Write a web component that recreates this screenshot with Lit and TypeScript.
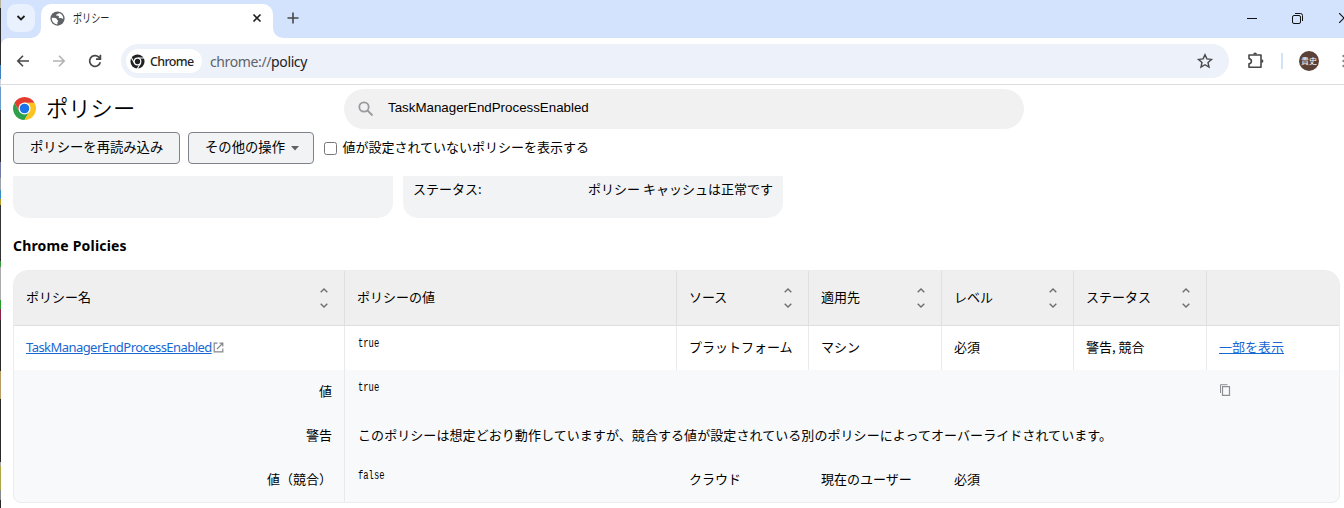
import { LitElement, html, css, svg } from "lit";
import { customElement, property } from "lit/decorators.js";

@customElement("sort-arrows")
class SortArrows extends LitElement {
  static styles = css`:host { display: block; width: 10px; height: 22px; } svg { display: block; }`;
  render() {
    return html`<svg width="10" height="22" viewBox="0 0 10 22" fill="none" stroke="#6b6f73" stroke-width="1.4">
      <path d="M1.700 5.300 5 2l3.300 3.300M1.700 16.700 5 20l3.300-3.300"/></svg>`;
  }
}

@customElement("chrome-logo")
class ChromeLogo extends LitElement {
  @property({ type: Boolean }) mono = false;
  @property({ type: Number }) size = 22;
  static styles = css`:host { display: block; } svg { display: block; }`;
  render() {
    const shape = this.mono
      ? svg`<circle cx="24" cy="24" r="22.500" fill="#202124"/><circle cx="24" cy="24" r="12.500" fill="#fff"/>
        <path d="M24 13H45M14.500 29.500 4 11.300M33.500 29.500 23 47.700" stroke="#fff" stroke-width="3.500"/><circle cx="24" cy="24" r="8.500" fill="#202124"/>`
      : svg`<path d="M3.220 12A24 24 0 0 0 24 48L34.400 30 24 24 13.600 30Z" fill="#2da04b"/>
        <path d="M44.780 12A24 24 0 0 1 24 48L34.400 30 24 12Z" fill="#fcc31e"/>
        <path d="M3.220 12A24 24 0 0 1 44.780 12H24L13.600 30Z" fill="#e33b2e"/>
        <circle cx="24" cy="24" r="12.500" fill="#fff"/><circle cx="24" cy="24" r="10" fill="#1a73e8"/>`;
    return html`<svg width=${this.size} height=${this.size} viewBox="0 0 48 48">${shape}</svg>`;
  }
}

@customElement("browser-chrome")
class BrowserChrome extends LitElement {
  static styles = css`
    :host { display: block; height: 85px; background: linear-gradient(#d3e2fd 50px, #fff 50px); }
    svg { display: block; flex: none; }
    .tabs { display: flex; height: 38px; }
    .down { width: 28px; height: 28px; margin: 4px 0 0 6px; border-radius: 9px; background: #e9f0fe; display: flex; align-items: center; justify-content: center; }
    .tab { box-sizing: border-box; width: 232px; height: 34px; margin: 4px 0 0 6px; padding: 0 9px; background: #fff; border-radius: 10px 10px 0 0; display: flex; align-items: center; padding-bottom: 6px; }
    .title { width: 40px; margin-left: 8px; font-size: 12px; color: #1f1f1f; transform: scaleX(.76); transform-origin: 0 50%; white-space: nowrap; }
    .close { margin-left: auto; margin-right: 2px; }
    .foot { align-self: flex-end; }
    .lead { margin: 0 -6px 0 -4px; }
    .plus { margin: 12px 0 0 4px; }
    .wins { margin-left: auto; display: flex; align-items: center; height: 36px; }
    .max { margin-left: 35px; }
    .x { margin-left: 36px; }
    .bar { box-sizing: border-box; height: 47px; display: flex; align-items: center; border-bottom: 1px solid #dcdde0; background: #fff; border-top-left-radius: 8px; }
    .nav { display: flex; gap: 20px; margin-left: 14px; width: 106px; }
    .omni { box-sizing: border-box; width: 1108px; height: 34px; border-radius: 17px; background: #edf1fa; display: flex; align-items: center; padding: 0 15px 0 5px; }
    .chip { box-sizing: border-box; width: 76px; height: 24px; border-radius: 12px; background: #fff; display: flex; align-items: center; padding-left: 4px; gap: 5px; }
    .brand { font: 500 12.500px "Noto Sans", sans-serif; letter-spacing: -.65px; color: #1f1f1f; }
    .url { margin-left: 8px; font: 14px "Noto Sans", sans-serif; letter-spacing: -.38px; color: #202124; }
    .scheme { color: #5f6368; }
    .star { margin-left: auto; }
    .ext { margin-left: 18px; }
    .sep { width: 2px; height: 16px; background: #d0e3f8; margin-left: 16px; }
    .avatar { width: 20px; height: 20px; border-radius: 50%; background: #5b4037; color: #fff; font-size: 8px; line-height: 19px; text-align: center; margin-left: 16px; }
    .dots { margin-left: 23px; }
  `;
  render() {
    return html`
      <div class="tabs">
        <div class="down"><svg width="10" height="8" viewBox="0 0 10 8" fill="none" stroke="#1f1f1f" stroke-width="1.800"><path d="M1.500 2 5 5.500 8.500 2"/></svg></div>
        <svg class="foot lead" width="10" height="10"><path d="M10 0V10H0A10 10 0 0 0 10 0" fill="#fff"/></svg>
        <div class="tab">
          <svg width="15" height="15" viewBox="0 0 16 16"><circle cx="8" cy="8" r="7.600" fill="#5f6368"/>
            <path d="M1.800 7.500c2-.5 4-.3 5 .4.900.6.300 1.800 1.400 2 .8.200.6 1.500-.3 2.100v2.200c-3.300 0-6.100-2.700-6.100-6.700zM9.500 2c-.3 1.300-2.600.8-2.800 2.200-.1.900 1.800.4 2.500 1.100.8.800-.4 1.300.5 2 1 .8 1.800-.2 2.500.4.600.5 1.300.6 2 .3C14.200 5 12.400 2.600 9.500 2" fill="#fff"/></svg>
          <span class="title">ポリシー</span>
          <svg class="close" width="10" height="10" viewBox="0 0 10 10" stroke="#1f1f1f" stroke-width="1.600"><path d="m1.500 1.500 7 7m0-7-7 7"/></svg>
        </div>
        <svg class="foot" width="10" height="10"><path d="M0 0V10H10A10 10 0 0 1 0 0" fill="#fff"/></svg>
        <svg class="plus" width="12" height="12" stroke="#474747" stroke-width="1.600"><path d="M6 .5v11M.5 6h11"/></svg>
        <div class="wins">
          <svg width="10" height="10" stroke="#111"><path d="M0 5.500h10"/></svg>
          <svg class="max" width="11" height="11" fill="none" stroke="#111" viewBox="0 0 11 11"><rect x=".5" y="2.500" width="8" height="8" rx="1.500"/><path d="M3 .5h5.500a2 2 0 0 1 2 2V8"/></svg>
          <svg class="x" width="5" height="10" stroke="#111" stroke-width="1.200"><path d="m0 0 10 10M0 10 10 0"/></svg>
        </div>
      </div>
      <div class="bar">
        <div class="nav">
          <svg width="16" height="16" viewBox="0 0 16 16" fill="none" stroke="#474747" stroke-width="1.600"><path d="M14 8H3M8 2.800 2.800 8 8 13.200"/></svg>
          <svg width="16" height="16" viewBox="0 0 16 16" fill="none" stroke="#b3b3b3" stroke-width="1.600"><path d="M2 8h11M8 2.800 13.200 8 8 13.200"/></svg>
          <svg width="16" height="16" viewBox="0 0 16 16" fill="none" stroke="#474747" stroke-width="1.700"><path d="M13.300 9.200A5.400 5.400 0 1 1 11.800 4.100L13.300 5.600M13.400 1.800v4.400H9"/></svg>
        </div>
        <div class="omni">
          <div class="chip"><chrome-logo mono .size=${15}></chrome-logo><span class="brand">Chrome</span></div>
          <span class="url"><span class="scheme">chrome://</span>policy</span>
          <svg class="star" width="18" height="18" viewBox="0 0 18 18" fill="none" stroke="#474747" stroke-width="1.400"><path d="m9 2.700 1.900 4.200 4.600.5-3.500 3.100 1 4.500-4-2.300L5 15l1-4.500-3.500-3.100 4.600-.5z"/></svg>
        </div>
        <svg class="ext" width="18" height="18" viewBox="0 0 18 18"><path d="M2 3H14V15.200H2V11.800C5.200 11.200 5.200 7.200 2 6.600Z" fill="none" stroke="#474747" stroke-width="1.600" stroke-linejoin="round"/><path d="M6.200 2.500a1.900 1.900 0 0 1 3.800 0zM14.500 7.200a1.900 1.900 0 0 1 0 3.800z" fill="#474747"/></svg>
        <div class="sep"></div>
        <div class="avatar">貴史</div>
        <svg class="dots" width="2" height="14" fill="#85888b"><circle cx="1.500" cy="2" r="1.200"/><circle cx="1.500" cy="7" r="1.200"/><circle cx="1.500" cy="12" r="1.200"/></svg>
      </div>`;
  }
}

@customElement("policy-table")
class PolicyTable extends LitElement {
  static styles = css`
    :host { display: block; box-sizing: border-box; width: 1327px; height: 233px; border: 1px solid #ececee; border-radius: 15px 15px 8px 8px; overflow: hidden; background: #f8f9fb; }
    .row { display: grid; grid-template-columns: 331px 332px 132px 133px 132px 133px 1fr; height: 44px; }
    .row:last-child { height: 45px; }
    .row:last-child .cell { padding-bottom: 4px; }
    .cell { box-sizing: border-box; border-right: 1px solid #e9eaec; padding: 0 12px 3px; display: flex; align-items: center; justify-content: space-between; white-space: nowrap; }
    .cell:last-child { border-right: 0; }
    .head { height: 55px; background: #efefef; border-bottom: 1px solid #dddee0; box-sizing: border-box; }
    .head .cell { border-color: #dfdfe1; padding-bottom: 2px; }
    .head sort-arrows { margin: 2px 3px 0 0; }
    .main { background: #fff; }
    .main .cell { padding-bottom: 2px; }
    .row .plain { border-color: transparent; }
    .label { justify-content: flex-end; padding-right: 12px; }
    .wide { grid-column: 2 / -1; letter-spacing: .07px; padding-left: 13px; }
    .mono { display: inline-block; font: 12px/14px "Liberation Mono", monospace; transform: scaleX(.735); transform-origin: 0 50%; margin: -6px 0 0 1px; }
    .link { color: #1967d2; text-decoration: underline; }
    .policy { justify-content: flex-start; gap: 1px; }
    .latin { font: 13px/18px "Noto Sans", sans-serif; letter-spacing: -.55px; }
    svg { display: block; }
    .copy { margin-top: -2px; }
  `;
  render() {
    const heads = ["ポリシー名", "ポリシーの値", "ソース", "適用先", "レベル", "ステータス", ""];
    return html`
      <div class="row head">${heads.map((h, i) => html`<div class="cell"><span>${h}</span>${i !== 1 && i !== 6 ? html`<sort-arrows></sort-arrows>` : ""}</div>`)}</div>
      <div class="row main">
        <div class="cell policy"><span class="link latin">TaskManagerEndProcessEnabled</span><svg width="11" height="11" viewBox="0 0 11 11" fill="none" stroke="#85888c" stroke-width="1.200"><path d="M4.500 1.200H1.200v8.600h8.600V6.500M6.500 1.200h3.300v3.300M9.500 1.500 4 7"/></svg></div>
        <div class="cell"><span class="mono">true</span></div>
        <div class="cell">プラットフォーム</div><div class="cell">マシン</div><div class="cell">必須</div><div class="cell">警告, 競合</div>
        <div class="cell"><span class="link">一部を表示</span></div>
      </div>
      <div class="row"><div class="cell label">値</div><div class="cell plain"><span class="mono">true</span></div>
        <div class="cell plain"></div><div class="cell plain"></div><div class="cell plain"></div><div class="cell plain"></div>
        <div class="cell"><svg class="copy" width="12" height="12" viewBox="0 0 12 12" fill="none" stroke="#8c8f93"><path d="M8.500.7H1.500V9" /><path d="M3.500 2.700h7v8.600h-7z" stroke-width="1.200"/></svg></div></div>
      <div class="row"><div class="cell label">警告</div><div class="cell wide">このポリシーは想定どおり動作していますが、競合する値が設定されている別のポリシーによってオーバーライドされています。</div></div>
      <div class="row"><div class="cell label">値（競合）</div><div class="cell plain"><span class="mono">false</span></div>
        <div class="cell plain">クラウド</div><div class="cell plain">現在のユーザー</div><div class="cell plain">必須</div></div>`;
  }
}

@customElement("app-root")
class AppRoot extends LitElement {
  static styles = css`
    :host { display: flex; width: 1344px; height: 508px; overflow: hidden; background: #fff; color: #000; font: 13px/18px "Noto Sans CJK JP", sans-serif; }
    .edge { width: 1px; flex: none; background: linear-gradient(#b9b39a 0 8px, #2d2d30 8px 65px, #3f83c4 65px 79px, #cfd4dc 79px 87px, #699cc9 87px 110px, #2c2c2e 110px 162px, #7379a5 162px 178px, #9ba2aa 178px 190px, #358fc0 190px 199px, #b79b24 199px 205px, #333 205px 261px, #369b36 261px 267px, #aaa 267px 300px, #279b2b 300px 309px, #882448 309px 320px, #29292b 320px 371px, #b69b62 371px 399px, #29292b 399px 462px, #aaa 462px 466px, #b0a646 466px 490px, #888 490px 500px, #282828 500px); }
    .main { width: 1343px; flex: none; }
    .content { padding-left: 12px; }
    .top { display: flex; align-items: center; height: 47px; }
    h1 { margin: -3px 0 0 10px; font-size: 22.300px; line-height: 30px; font-weight: 350; width: 298px; }
    .search { box-sizing: border-box; width: 680px; height: 40px; border-radius: 20px; background: #f1f1f2; display: flex; align-items: center; padding: 0 14px; gap: 14px; margin-top: 1px; }
    .query { font: 13.333px "Liberation Sans", sans-serif; margin-top: -3px; }
    .tools { display: flex; align-items: center; height: 32px; }
    .btn { box-sizing: border-box; height: 32px; border: 1px solid #7f8289; border-radius: 4px; background: #f1f3f5; font-size: 13.333px; display: flex; align-items: center; padding: 0 0 2px 16px; }
    .reload { width: 167px; }
    .more { width: 126px; margin-left: 8px; gap: 6px; }
    .more svg { margin-top: 3px; }
    .check { box-sizing: border-box; width: 13px; height: 13px; border: 1px solid #767676; border-radius: 2.500px; margin: 1px 5.500px 0 10px; }
    .option { margin-top: -2px; }
    .cards { display: flex; gap: 10px; margin-top: 12px; }
    .card { box-sizing: border-box; width: 380px; height: 42px; background: #f1f3f5; border-radius: 0 0 15px 15px; display: flex; justify-content: space-between; padding: 4px 10px; }
    h2 { margin: 18px 0 14px; font: 700 14px/20px "Noto Sans", sans-serif; letter-spacing: .18px; }
  `;
  render() {
    return html`<div class="edge"></div><div class="main">
      <browser-chrome></browser-chrome>
      <div class="content">
        <div class="top"><chrome-logo .size=${23}></chrome-logo><h1>ポリシー</h1>
          <div class="search"><svg width="16" height="16" viewBox="0 0 16 16" fill="none" stroke="#989a9d" stroke-width="1.800"><circle cx="6" cy="6" r="4.700"/><path d="m9.500 9.500 5 5"/></svg><span class="query">TaskManagerEndProcessEnabled</span></div></div>
        <div class="tools"><div class="btn reload">ポリシーを再読み込み</div>
          <div class="btn more">その他の操作<svg width="8" height="5"><path d="M0 0h8L4 4.500z" fill="#5f6368"/></svg></div>
          <div class="check"></div><span class="option">値が設定されていないポリシーを表示する</span></div>
        <div class="cards"><div class="card"></div><div class="card"><span>ステータス:</span><span>ポリシー キャッシュは正常です</span></div></div>
        <h2>Chrome Policies</h2>
        <policy-table></policy-table>
      </div></div>`;
  }
}
